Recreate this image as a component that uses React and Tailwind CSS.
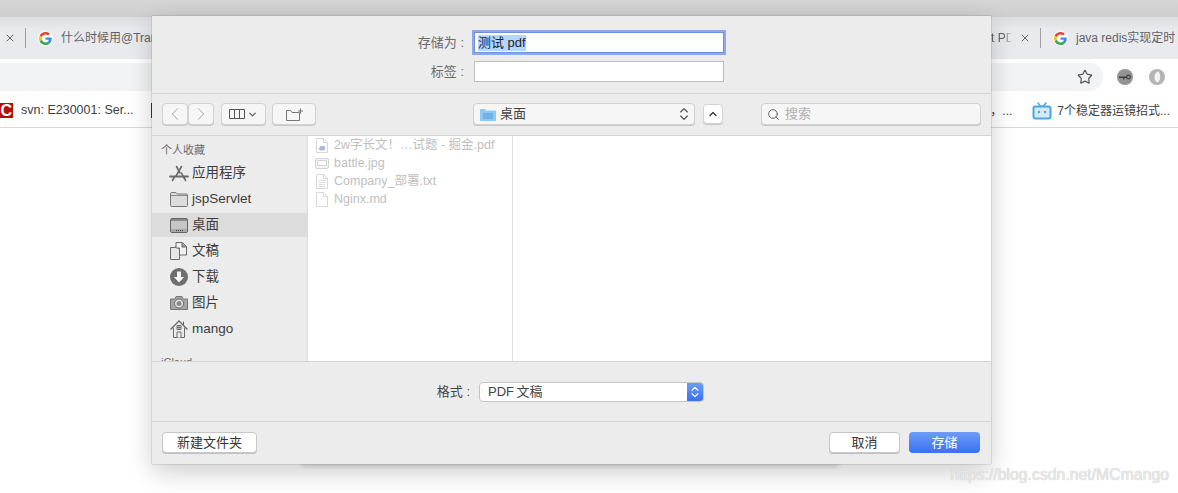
import { ChevronDown, ChevronLeft, ChevronRight, ChevronUp, ChevronsUpDown, Search, Star, X } from "lucide-react";

function GoogleIcon() {
  return (
    <div className="flex h-[15px] w-[15px] shrink-0 items-center justify-center rounded-full bg-white">
      <svg width="13" height="13" viewBox="0 0 48 48">
        <path fill="#EA4335" d="M24 9.5c3.5 0 6.700 1.200 9.200 3.600l6.900-6.900C35.900 2.400 30.400 0 24 0 14.600 0 6.500 5.400 2.600 13.200l8 6.200C12.400 13.700 17.700 9.500 24 9.500z" />
        <path fill="#4285F4" d="M47 24.500c0-1.600-.1-3.100-.4-4.500H24v9h12.900c-.6 3-2.200 5.500-4.700 7.200l7.700 6c4.500-4.200 7.100-10.300 7.100-17.700z" />
        <path fill="#FBBC05" d="M10.600 28.600c-.5-1.400-.8-3-.8-4.600s.3-3.200.8-4.600l-8-6.200C.9 16.500 0 20.100 0 24s.9 7.500 2.600 10.800l8-6.200z" />
        <path fill="#34A853" d="M24 48c6.500 0 11.900-2.100 15.900-5.800l-7.700-6c-2.200 1.400-4.900 2.300-8.200 2.300-6.300 0-11.600-4.200-13.400-9.900l-8 6.200C6.500 42.600 14.600 48 24 48z" />
      </svg>
    </div>
  );
}

function AppsIcon() {
  return (
    <svg width="20" height="17" viewBox="0 0 20 17" fill="none" stroke="#6a6a6a" strokeLinecap="round">
      <path d="M7.500 1.500L11 8M12.500 1.500L7 11" strokeWidth="1.600" />
      <path d="M1 11.500h18" strokeWidth="1.800" />
      <path d="M12.500 8l3 6M5.500 12L3.500 15.500M15 12l1.500 3.500" strokeWidth="1.600" />
    </svg>
  );
}

function FolderIcon() {
  return (
    <svg width="18" height="15" viewBox="0 0 18 15">
      <path d="M.5 13.500V1.500q0-1 1-1h4.500l1.500 1.500h9q1 0 1 1v10.500q0 1-1 1h-15q-1 0-1-1z" fill="#dcdcdc" stroke="#777" />
      <path d="M1 3.500h16" stroke="#8a8a8a" />
    </svg>
  );
}

function DesktopIcon() {
  return (
    <svg width="18" height="15" viewBox="0 0 18 15">
      <rect x=".5" y=".5" width="17" height="14" rx="1.500" fill="#c6c6c6" stroke="#666" />
      <rect x="1" y="1" width="16" height="2" fill="#8a8a8a" />
      <rect x="1" y="11" width="16" height="3" fill="#a8a8a8" />
      <path d="M6 12.500h1M8 12.500h1M10 12.500h1M12 12.500h1" stroke="#444" />
    </svg>
  );
}

function DocsIcon() {
  return (
    <svg width="18" height="18" viewBox="0 0 18 18" fill="none" stroke="#6a6a6a">
      <path d="M.5 5.500h5v-1l3-1v3h1v11h-9z" fill="#e6e6e6" />
      <path d="M6 .5h6.500l4 4V13H9.500V6H6z" fill="#f1f1f1" />
      <path d="M12 1v4h4.500" fill="#999" />
    </svg>
  );
}

function DownloadIcon() {
  return (
    <svg width="18" height="18" viewBox="0 0 18 18">
      <circle cx="9" cy="9" r="9" fill="#6e6e6e" />
      <path d="M7 3.500h4V9h3.200L9 14.500 3.800 9H7z" fill="#f4f4f4" />
    </svg>
  );
}

function CameraIcon() {
  return (
    <svg width="18" height="14" viewBox="0 0 18 14">
      <path d="M.5 3h4.500l1-2.500h6l1 2.500h4.500v10.500H.5z" fill="#a4a4a4" stroke="#777" />
      <circle cx="9" cy="7.500" r="4.500" fill="#e6e6e6" stroke="#666" />
      <circle cx="9" cy="7.500" r="2.500" fill="#8a8a8a" />
    </svg>
  );
}

function HomeIcon() {
  return (
    <svg width="18" height="18" viewBox="0 0 18 18" fill="none" stroke="#6a6a6a">
      <path d="M.5 9.500L9 1l8.500 8.500" strokeWidth="1.300" />
      <path d="M3.500 7.500v10h11v-10M13.500 1.500v3.500" />
      <path d="M7 17.500v-5.500h4v5.500M7 5.500h4v4H7zM7 7.500h4M9 5.500v4" fill="#eee" />
    </svg>
  );
}

function FileIcon({ lines, pdf }) {
  return (
    <svg width="12" height="15" viewBox="0 0 12 15" fill="none" stroke="#d8d8d8">
      <path d="M.5.500h7l4 4v10H.5z" fill="#fff" />
      <path d="M7.500.500v4h4" />
      {lines && <path d="M2.500 6.500h7M2.500 8.500h7M2.500 10.500h7M2.500 12.500h7" stroke="#e0e0e0" />}
      {pdf && <path d="M2.500 11l2-3h4l1 3-2 1.500h-3z" fill="#b0b8d8" stroke="none" />}
    </svg>
  );
}

function ImageIcon() {
  return (
    <svg width="14" height="11" viewBox="0 0 14 11" fill="#f6f6f6" stroke="#d4d4d4">
      <rect x=".5" y=".5" width="13" height="10" rx="1.500" />
      <path d="M2.500 2.500h9v5h-9z" fill="#fff" />
    </svg>
  );
}

function BiliIcon() {
  return (
    <svg width="20" height="18" viewBox="0 0 20 18" fill="none">
      <path d="M6 1l2.500 3M14 1l-2.500 3" stroke="#4aa5e0" strokeWidth="1.500" strokeLinecap="round" />
      <rect x="1.500" y="4.500" width="17" height="12" rx="2" stroke="#4aa5e0" strokeWidth="2" fill="#d3eafa" />
      <circle cx="7" cy="10" r="1.200" fill="#4aa5e0" />
      <circle cx="13" cy="10" r="1.200" fill="#4aa5e0" />
    </svg>
  );
}

function KeyIcon() {
  return (
    <svg width="16" height="16" viewBox="0 0 16 16">
      <circle cx="8" cy="8" r="8" fill="#939393" />
      <path d="M2 7.500h8v1.500H7.500v1.500H6V9H2z" fill="#3f3f3f" />
      <circle cx="11.500" cy="8" r="1.800" fill="none" stroke="#3f3f3f" strokeWidth="1.200" />
    </svg>
  );
}

function RingIcon() {
  return (
    <svg width="16" height="16" viewBox="0 0 16 16">
      <circle cx="8" cy="8" r="8" fill="#b4b4b4" />
      <path d="M9 2.500c3 1.500 3 9.500-.5 11-2.500-1-3-3-3-5.500s1-4.500 3.500-5.500z" fill="#f4f4f4" />
    </svg>
  );
}

function Favorite({ icon, label, active }) {
  return (
    <div className="h-[26px] py-[1px]">
      <div className={`flex h-full items-center ${active ? "bg-[#dcdcdc]" : ""}`}>
        <div className="flex w-[40px] shrink-0 items-center justify-center pl-[15px] pr-[2px]">{icon}</div>
        <span className="pt-[1px] text-[13.5px] text-[#3c3c3c]">{label}</span>
      </div>
    </div>
  );
}

function FileRow({ icon, label }) {
  return (
    <div className="flex h-[18px] items-center">
      <div className="flex w-[26px] shrink-0 justify-center pl-[2px]">{icon}</div>
      <span className="text-[12.5px] text-[#c0c0c0]">{label}</span>
    </div>
  );
}

const btn = "flex items-center justify-center rounded-[4px] border border-[#d2d2d2] bg-[#f6f6f6] shadow-[0_1px_0_#c8c8c8]";

export default function App() {
  return (
    <div className="relative h-[493px] w-[1178px] overflow-hidden bg-white font-['Liberation_Sans','Noto_Sans_CJK_SC',sans-serif]">
      <div className="h-[17px] bg-gradient-to-b from-[#d6d6d6] to-[#cecece]" />

      {/* tab strip */}
      <div className="flex h-[42px] items-center justify-between bg-gradient-to-b from-[#dcdde0] to-[#e9eaed] to-30%">
        <div className="flex items-center">
          <X size={12} strokeWidth={2} className="ml-[4px] text-[#666]" />
          <div className="ml-[9px] mr-[12px] h-[20px] w-px bg-[#a0a0a0]" />
          <GoogleIcon />
          <span className="ml-[8px] text-[12px] text-[#5f6368]">什么时候用@Transactional</span>
        </div>
        <div className="flex items-center">
          <span className="mr-[7px] w-[21px] overflow-hidden whitespace-nowrap text-[12px] text-[#5f6368] [mask-image:linear-gradient(to_right,black_60%,transparent)]">t PDF</span>
          <X size={12} strokeWidth={2} className="text-[#666]" />
          <div className="ml-[9px] mr-[12px] h-[20px] w-px bg-[#a0a0a0]" />
          <GoogleIcon />
          <span className="ml-[8px] w-[102px] overflow-hidden whitespace-nowrap text-[12px] text-[#5f6368]">java redis实现定时</span>
        </div>
      </div>

      {/* address bar */}
      <div className="flex h-[32px] items-end bg-white">
        <div className="flex h-[28px] w-[1103px] items-center justify-end rounded-r-[14px] bg-[#f1f3f4] pr-[10px]">
          <Star size={16} strokeWidth={1.800} className="text-[#555]" />
        </div>
        <div className="mb-[6px] ml-[14px]"><KeyIcon /></div>
        <div className="mb-[6px] ml-[16px]"><RingIcon /></div>
      </div>

      {/* bookmarks */}
      <div className="flex h-[37px] items-center justify-between border-b border-[#d9d9d9] bg-white pt-[3px]">
        <div className="flex items-center">
          <div className="flex h-[15px] w-[13px] items-center justify-end overflow-hidden bg-[#b3100c] pr-[1px] text-[16px] font-bold leading-none text-white">C</div>
          <span className="ml-[8px] text-[12.5px] text-[#3c4043]">svn: E230001: Ser...</span>
          <div className="ml-[17px] h-[15px] w-[3px] bg-[#a00d0a]" />
        </div>
        <div className="flex items-center pr-[8px]">
          <span className="mr-[20px] text-[12px] text-[#3c4043]">，...</span>
          <BiliIcon />
          <span className="ml-[5px] text-[12px] text-[#3c4043]">7个稳定器运镜招式...</span>
        </div>
      </div>

      {/* sheet behind the dialog */}
      <div className="absolute left-[300px] top-[440px] h-[26px] w-[540px] rounded-b-[6px] bg-[#e8e8e8] shadow-[0_1px_4px_rgba(0,0,0,0.15)]" />

      {/* save dialog */}
      <div className="absolute left-[152px] top-[16px] flex h-[448px] w-[839px] flex-col bg-[#ececec] shadow-[0_0_1px_rgba(0,0,0,0.5),0_8px_24px_rgba(0,0,0,0.2)]">
        <div className="flex h-[78px] shrink-0 flex-col gap-[8px] border-b border-[#d4d4d4] pt-[16px]">
          <div className="flex items-center">
            <span className="w-[312px] text-right text-[13px] text-[#6b6b6b]">存储为 :</span>
            <div className="ml-[10px] flex h-[21px] w-[250px] items-center border border-[#6f8fe0] bg-white pl-[3px] shadow-[0_0_0_2px_#8fa8ec]">
              <span className="bg-[#b3d7ff] text-[13px] leading-[16px] text-[#222]">测试 pdf</span>
            </div>
          </div>
          <div className="flex items-center">
            <span className="w-[312px] text-right text-[13px] text-[#6b6b6b]">标签 :</span>
            <div className="ml-[10px] h-[21px] w-[250px] border border-[#bcbcbc] bg-white" />
          </div>
        </div>

        <div className="flex h-[42px] shrink-0 items-center border-b border-[#d4d4d4] pb-[1px] pl-[10px]">
          <div className={`${btn} h-[22px] w-[26px] text-[#b0b0b0]`}>
            <ChevronLeft size={22} strokeWidth={1.100} />
          </div>
          <div className={`${btn} h-[22px] w-[26px] text-[#b0b0b0]`}>
            <ChevronRight size={22} strokeWidth={1.100} />
          </div>
          <div className={`${btn} ml-[7px] h-[22px] w-[45px] gap-[2px] text-[#555]`}>
            <svg width="16" height="10" viewBox="0 0 16 10" fill="none" stroke="#555">
              <path d="M.5.500h15v9H.5zM5.500.500v9M10.500.500v9" />
            </svg>
            <ChevronDown size={11} strokeWidth={2.500} />
          </div>
          <div className={`${btn} ml-[6px] h-[22px] w-[44px]`}>
            <svg width="17" height="13" viewBox="0 0 17 13" fill="none" stroke="#777">
              <path d="M.5 2.500v10h13v-8H6L4.500 2.500zM14.500.5v5M12 3h5" />
            </svg>
          </div>
          <div className={`${btn} ml-[157px] h-[22px] w-[222px] pl-[6px] pr-[2px]`}>
            <svg width="16" height="13" viewBox="0 0 16 13">
              <path d="M0 2q0-1 1-1h4l1 1.500h9q1 0 1 1V12q0 1-1 1H1q-1 0-1-1z" fill="#8ec8f2" />
              <rect x="3" y="5" width="10" height="6" fill="#6fb3e6" />
            </svg>
            <span className="ml-[4px] flex-1 text-[13px] text-[#444]">桌面</span>
            <ChevronsUpDown size={16} strokeWidth={1.600} className="text-[#444]" />
          </div>
          <div className={`${btn} ml-[8px] h-[20px] w-[20px] bg-white text-[#333]`}>
            <ChevronUp size={12} strokeWidth={2.500} />
          </div>
          <div className={`${btn} ml-[38px] h-[22px] w-[220px] justify-start pl-[5px]`}>
            <Search size={13} strokeWidth={1.800} className="text-[#666]" />
            <span className="ml-[5px] text-[13px] text-[#b0b0b0]">搜索</span>
          </div>
        </div>

        {/* browser */}
        <div className="flex h-[226px] shrink-0 overflow-hidden border-b border-[#d4d4d4]">
          <div className="w-[156px] shrink-0 overflow-hidden border-r border-[#dcdcdc] pt-[6px]">
            <div className="mb-[2px] pl-[9px] text-[11px] leading-[16px] text-[#6b6b6b]">个人收藏</div>
            <Favorite icon={<AppsIcon />} label="应用程序" />
            <Favorite icon={<FolderIcon />} label="jspServlet" />
            <Favorite icon={<DesktopIcon />} label="桌面" active />
            <Favorite icon={<DocsIcon />} label="文稿" />
            <Favorite icon={<DownloadIcon />} label="下载" />
            <Favorite icon={<CameraIcon />} label="图片" />
            <Favorite icon={<HomeIcon />} label="mango" />
            <div className="mt-[12px] pl-[9px] text-[11px] leading-[16px] text-[#6b6b6b]">iCloud</div>
          </div>
          <div className="w-[205px] shrink-0 border-r border-[#e2e2e2] bg-white">
            <FileRow icon={<FileIcon pdf />} label="2w字长文！…试题 - 掘金.pdf" />
            <FileRow icon={<ImageIcon />} label="battle.jpg" />
            <FileRow icon={<FileIcon lines />} label="Company_部署.txt" />
            <FileRow icon={<FileIcon />} label="Nginx.md" />
          </div>
          <div className="flex-1 bg-white" />
        </div>

        <div className="flex h-[60px] shrink-0 items-center border-b border-[#d4d4d4]">
          <span className="w-[318px] pt-[1px] text-right text-[13px] text-[#444]">格式 :</span>
          <div className="ml-[9px] flex h-[20px] w-[225px] items-center justify-between overflow-hidden rounded-[4px] border border-[#c4c4c4] bg-white">
            <span className="pl-[8px] pt-[1px] text-[13px] text-[#444] [word-spacing:-1px]">PDF 文稿</span>
            <div className="flex h-full w-[16px] items-center justify-center bg-gradient-to-b from-[#6d9df5] to-[#3d6ff0] text-white">
              <ChevronsUpDown size={14} strokeWidth={2} />
            </div>
          </div>
        </div>

        <div className="flex flex-1 items-center justify-between pl-[10px] pr-[11px] pb-[1px]">
          <div className="flex h-[21px] w-[95px] items-center justify-center rounded-[4px] border border-[#c8c8c8] bg-white text-[13px] text-[#333] shadow-[0_1px_0_#c0c0c0]">
            新建文件夹
          </div>
          <div className="flex gap-[9px]">
            <div className="flex h-[21px] w-[71px] items-center justify-center rounded-[4px] border border-[#c8c8c8] bg-white text-[13px] text-[#333] shadow-[0_1px_0_#c0c0c0]">
              取消
            </div>
            <div className="flex h-[21px] w-[71px] items-center justify-center rounded-[4px] bg-gradient-to-b from-[#6c9cf6] to-[#3d6ff2] text-[13px] text-white">
              存储
            </div>
          </div>
        </div>
      </div>

      <div className="absolute right-[9px] top-[465px] text-[15.8px] leading-[20px] text-[#e8e8e8] [text-shadow:0_0_1px_#bbb]">
        https://blog.csdn.net/MCmango
      </div>
    </div>
  );
}
